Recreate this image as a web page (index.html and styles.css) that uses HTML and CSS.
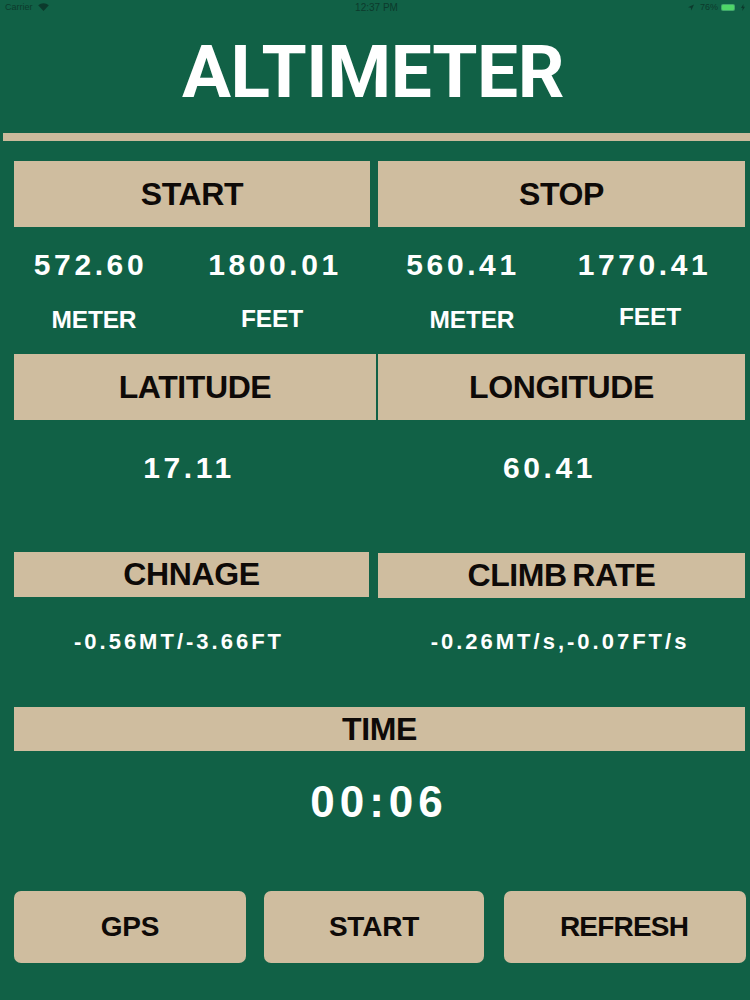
FILE: index.html
```html
<!DOCTYPE html>
<html lang="en">
<head>
<meta charset="utf-8">
<title>Altimeter</title>
<link rel="stylesheet" href="styles.css">
</head>
<body>
<div class="status">
  <div class="status-left">
    <span>Carrier</span>
    <svg class="wifi" viewBox="0 0 12 9"><path d="M6 9 0 2.6C3.6-.5 8.400-.5 12 2.600Z"/></svg>
  </div>
  <div class="status-time">12:37 PM</div>
  <div class="status-right">
    <svg class="arrow" viewBox="0 0 8 8"><path d="M8 0 0 3.600 3.800 4.200 4.400 8Z"/></svg>
    <span>76%</span>
    <span class="battery"><span class="battery-fill"></span></span>
    <svg class="bolt" viewBox="0 0 4 7"><path d="M2.500 0 0 4H1.600L1.300 7 4 2.800H2.300Z"/></svg>
  </div>
</div>
<h1 class="title">ALTIMETER</h1>
<div class="rule"></div>
<main class="content">
  <section class="pair pair-tall pair-first">
    <div class="head">START</div>
    <div class="head">STOP</div>
  </section>
  <section class="readings">
    <div>572.60</div>
    <div>1800.01</div>
    <div>560.41</div>
    <div>1770.41</div>
  </section>
  <section class="units">
    <div class="unit-low">METER</div>
    <div class="unit-mid">FEET</div>
    <div class="unit-low">METER</div>
    <div class="unit-high">FEET</div>
  </section>
  <section class="pair pair-tall pair-coords">
    <div class="head">LATITUDE</div>
    <div class="head">LONGITUDE</div>
  </section>
  <section class="coords">
    <div>17.11</div>
    <div>60.41</div>
  </section>
  <section class="pair pair-short pair-change">
    <div class="head">CHNAGE</div>
    <div class="head head-down">CLIMB RATE</div>
  </section>
  <section class="rates">
    <div>-0.56MT/-3.66FT</div>
    <div class="rate-right">-0.26MT/s,-0.07FT/s</div>
  </section>
  <div class="head head-time">TIME</div>
  <div class="clock">00:06</div>
  <nav class="actions">
    <button class="action action-gps">GPS</button>
    <button class="action action-start">START</button>
    <button class="action action-refresh">REFRESH</button>
  </nav>
</main>
</body>
</html>
```
FILE: styles.css
```css
* { box-sizing: border-box; }
html, body { margin: 0; }
body {
  width: 750px;
  height: 1000px;
  overflow: hidden;
  background: #116146;
  color: #fff;
  font-family: "Liberation Sans", Arial, sans-serif;
  font-weight: 700;
}
.status {
  height: 14px;
  padding: 0 5px 0 5px;
  display: grid;
  grid-template-columns: 1fr auto 1fr;
  align-items: center;
  font-size: 9px;
  font-weight: 400;
  color: #0c3a2c;
}
.status-left { display: flex; align-items: center; gap: 5px; }
.status-time { font-size: 10px; margin-left: 3px; }
.status-right { display: flex; align-items: center; justify-content: flex-end; gap: 3px; }
.wifi { width: 11px; height: 8px; fill: #0c3a2c; }
.arrow { width: 6px; height: 7px; fill: #0c3a2c; margin-right: 3px; }
.bolt { width: 4px; height: 7px; fill: #0c3a2c; margin-left: 3px; }
.battery {
  display: block;
  width: 14px;
  height: 7px;
  padding: 1px;
  border-radius: 2px;
  background: #3fa76a;
}
.battery-fill { display: block; height: 100%; width: 100%; border-radius: 1px; background: #4fd768; }
.title {
  margin: 20px 0 0;
  height: 77px;
  padding-right: 4px;
  text-align: center;
  font-family: Roboto, "Liberation Sans", sans-serif;
  font-size: 73px;
  line-height: 77px;
  font-weight: 700;
  letter-spacing: -0.4px;
}
.rule { margin: 22px 0 0 3px; height: 8px; background: #cbba9c; }
.content { padding: 0 5px 0 14px; }
.pair { display: grid; grid-template-columns: 356px 367px; column-gap: 8px; }
.pair-first { margin-top: 20px; }
.pair-tall .head { height: 66px; }
.pair-short .head { height: 45px; }
.head {
  display: flex;
  align-items: center;
  justify-content: center;
  background: #cfbd9f;
  color: #0e0a08;
  font-size: 32px;
  letter-spacing: -0.4px;
  word-spacing: -3px;
}
.head-down { margin-top: 1px; }
.readings {
  display: grid;
  grid-template-columns: 153px 216px 160px 203px;
  margin-top: 21px;
  text-align: center;
  font-size: 30px;
  line-height: 34px;
  letter-spacing: 3.600px;
}
.units {
  display: grid;
  grid-template-columns: 160px 196px 204px 152px;
  margin-top: 19px;
  height: 42px;
  text-align: center;
  font-size: 24.500px;
  line-height: 29px;
  letter-spacing: -0.2px;
}
.unit-low { padding-top: 4px; }
.unit-mid { padding-top: 3px; }
.unit-high { padding-top: 1px; }
.pair-coords { margin-top: 11px; grid-template-columns: 362px 367px; column-gap: 2px; }
.coords {
  display: grid;
  grid-template-columns: 350px 371px;
  margin-top: 31px;
  text-align: center;
  font-size: 30px;
  line-height: 34px;
  letter-spacing: 3.600px;
}
.pair-change { margin-top: 67px; grid-template-columns: 355px 367px; column-gap: 9px; }
.rates {
  display: grid;
  grid-template-columns: 330px 394px;
  margin-top: 31px;
  text-align: center;
  font-size: 22px;
  line-height: 26px;
  letter-spacing: 3px;
}
.rate-right { padding-left: 38px; white-space: nowrap; }
.head-time { margin-top: 52px; height: 44px; width: 731px; }
.clock {
  margin-top: 26px;
  height: 50px;
  padding-right: 1px;
  text-align: center;
  font-size: 44px;
  line-height: 50px;
  letter-spacing: 5px;
}
.actions { display: flex; margin-top: 64px; }
.action {
  flex: none;
  height: 72px;
  border: 0;
  padding: 0;
  border-radius: 7px;
  background: #cfbd9f;
  color: #0e0a08;
  font: inherit;
  font-size: 28px;
  letter-spacing: -0.2px;
}
.action-gps { width: 232px; }
.action-start { width: 220px; margin-left: 18px; }
.action-refresh { width: 242px; margin-left: 20px; padding-right: 2px; letter-spacing: -0.8px; }
```
